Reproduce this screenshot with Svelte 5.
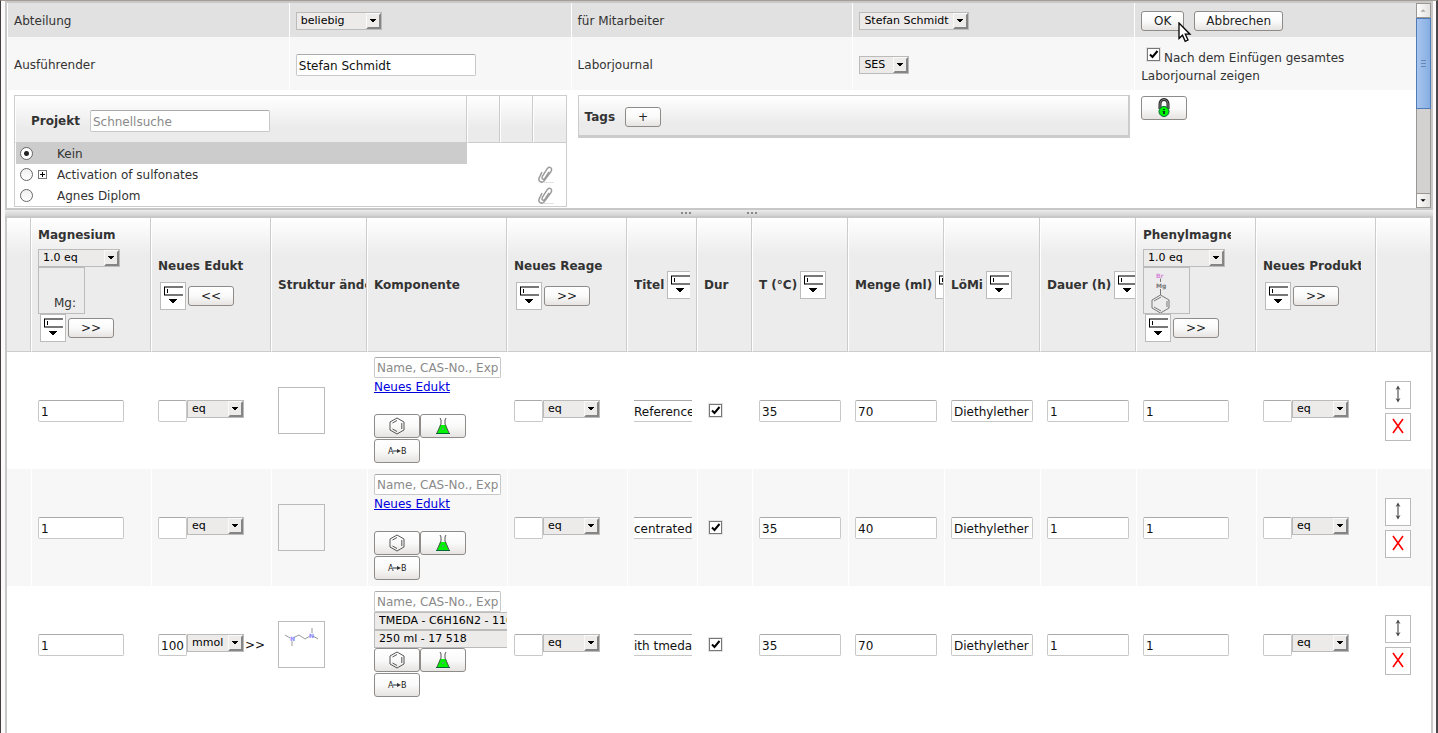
<script lang="ts">
    const columns = [
        { title: "", width: 24 },
        { title: "Magnesium", width: 120, eq: true, structure: "mg", button: ">>" },
        { title: "Neues Edukt", width: 120, button: "<<" },
        { title: "Struktur ändern", width: 96 },
        { title: "Komponente", width: 140 },
        { title: "Neues Reage", width: 120, button: ">>" },
        { title: "Titel", width: 70, fill: true, clip: true },
        { title: "Dur", width: 55 },
        { title: "T (°C)", width: 96, fill: true },
        { title: "Menge (ml)", width: 96, fill: true },
        { title: "LöMi", width: 96, fill: true },
        { title: "Dauer (h)", width: 96, fill: true },
        { title: "Phenylmagnesium", width: 120, eq: true, structure: "phenyl", button: ">>" },
        { title: "Neues Produkt", width: 120, button: ">>" },
        { title: "", width: 0 },
    ];

    let rows = $state([
        { edukt: "", unit: "eq", title: "Reference", temp: "35", volume: "70", solvent: "Diethylether", time: "1", done: true, tmeda: false },
        { edukt: "", unit: "eq", title: "centrated", temp: "35", volume: "40", solvent: "Diethylether", time: "1", done: true, tmeda: false },
        { edukt: "100", unit: "mmol", title: "ith tmeda", temp: "35", volume: "70", solvent: "Diethylether", time: "1", done: true, tmeda: true },
    ]);

    const projects = [
        { name: "Kein", tree: false, clip: false },
        { name: "Activation of sulfonates", tree: true, clip: true },
        { name: "Agnes Diplom", tree: false, clip: true },
    ];
    let project = $state("Kein");
    let executor = $state("Stefan Schmidt");
    let showAll = $state(true);
</script>

{#snippet drop(label, text, size, id)}
    <span class="drop {size}">
        <select {id} aria-label={label}><option>{text}</option></select>
        <svg class="drop-arrow" width="15" height="16" viewBox="0 0 15 16">
            <rect width="15" height="16" fill="#eeecea" />
            <path d="M0 0H15V1H1V16H0Z" fill="#fafafa" />
            <path d="M15 0V16H0L2 14H13V2Z" fill="#858585" />
            <path d="M4 6H10V7H9V8H8V9H6V8H5V7H4Z" fill="#000" />
        </svg>
    </span>
{/snippet}

{#snippet fillButton()}
    <button class="tile" aria-label="Spalte ausfüllen">
        <svg width="24" height="26" viewBox="0 0 24 26">
            <path d="M3 4H22M3 12H22" stroke="#777" stroke-width="2" />
            <path d="M3.5 4V12M6.5 6V10" stroke="#000" />
            <path d="M8 16H16V17H15V18H14V19H13V20H11V19H10V18H9V17H8Z" fill="#000" />
        </svg>
    </button>
{/snippet}

{#snippet clipIcon()}
    <svg width="18" height="18" viewBox="0 0 18 18" fill="none">
        <path d="M7 16.5H17" stroke="#e2e2e2" />
        <path d="M5 6 2.2 11.8C.8 15 4.5 17.6 7 15L13.8 5.8C16 2 12.6 0 10.4 2.4L5.5 10.2C4 13.4 6.8 14.2 8 12.2L12 6" stroke="#9c9c9c" stroke-width="1.5" />
    </svg>
{/snippet}

<div class="app">
    <section class="upper">
        <div class="scroll-area">
            <table class="form">
                <tbody>
                    <tr class="row-dark">
                        <td><label for="dept">Abteilung</label></td>
                        <td>{@render drop("Abteilung", "beliebig", "w86", "dept")}</td>
                        <td><label for="user">für Mitarbeiter</label></td>
                        <td>{@render drop("für Mitarbeiter", "Stefan Schmidt", "w110", "user")}</td>
                        <td>
                            <div class="actions">
                                <button class="ok">OK
                                    <svg class="cursor" width="14" height="21" viewBox="0 0 14 21">
                                        <path d="M1 1V16.5L4.5 13.2 7.2 19.3 10 18 7.3 12.2H12Z" fill="#fff" stroke="#000" stroke-width="1.3" />
                                    </svg>
                                </button>
                                <button class="cancel">Abbrechen</button>
                            </div>
                        </td>
                    </tr>
                    <tr class="row-light">
                        <td><label for="executor">Ausführender</label></td>
                        <td><input id="executor" class="w180" type="text" bind:value={executor} /></td>
                        <td><label for="journal">Laborjournal</label></td>
                        <td>{@render drop("Laborjournal", "SES", "w50", "journal")}</td>
                        <td>
                            <label class="show-all"><input type="checkbox" bind:checked={showAll} /> Nach dem Einfügen gesamtes Laborjournal zeigen</label>
                        </td>
                    </tr>
                    <tr class="row-boxes">
                        <td colspan="2">
                            <table class="projects">
                                <colgroup><col /><col class="narrow" /><col class="narrow" /><col class="narrow" /></colgroup>
                                <thead>
                                    <tr>
                                        <th>
                                            <div class="project-head">
                                                <label for="quick">Projekt</label>
                                                <input id="quick" class="w180" type="text" placeholder="Schnellsuche" />
                                            </div>
                                        </th>
                                        <th></th>
                                        <th></th>
                                        <th></th>
                                    </tr>
                                </thead>
                                <tbody>
                                    {#each projects as p}
                                        <tr>
                                            <td class:selected={project === p.name}>
                                                <label class="project">
                                                    <input type="radio" name="project" value={p.name} bind:group={project} />
                                                    <span class="tree">
                                                        {#if p.tree}
                                                            <svg width="9" height="9" viewBox="0 0 9 9" fill="none">
                                                                <rect x=".5" y=".5" width="8" height="8" stroke="#777" />
                                                                <path d="M2 4.5H7M4.5 2V7" stroke="#000" />
                                                            </svg>
                                                        {/if}
                                                    </span>
                                                    {p.name}
                                                </label>
                                            </td>
                                            <td></td>
                                            <td></td>
                                            <td class="clip-cell">
                                                {#if p.clip}{@render clipIcon()}{/if}
                                            </td>
                                        </tr>
                                    {/each}
                                </tbody>
                            </table>
                        </td>
                        <td colspan="2">
                            <div class="tags">
                                <strong>Tags</strong>
                                <button class="w36" aria-label="Tag hinzufügen">+</button>
                            </div>
                        </td>
                        <td>
                            <button class="icon-button" aria-label="Sperren">
                                <svg width="14" height="20" viewBox="0 0 14 20">
                                    <path d="M3 11V6a4 4.5 0 0 1 8 0V11" fill="none" stroke="#222" stroke-width="3" />
                                    <path d="M3 11V6a4 4.5 0 0 1 8 0V11" fill="none" stroke="#888" />
                                    <circle cx="7" cy="13.5" r="5" fill="#00f400" stroke="#063" />
                                    <path d="M6 11H8V12H6ZM5.5 13H8V16H6V14H5.5Z" fill="#042" />
                                </svg>
                            </button>
                        </td>
                    </tr>
                </tbody>
            </table>
        </div>
        <div class="scrollbar">
            <svg class="end" width="15" height="15" viewBox="0 0 15 15"><path d="M4 9H10L7 6Z" fill="#aaa" /></svg>
            <div class="thumb">
                <svg width="5" height="8" viewBox="0 0 5 8"><path d="M0 .5H5M0 3.5H5M0 6.5H5" stroke="#6487b4" /></svg>
            </div>
            <svg class="end down" width="15" height="15" viewBox="0 0 15 15"><path d="M4 6H10L7 9Z" fill="#000" /></svg>
        </div>
    </section>

    <div class="splitter">
        <svg width="10" height="2" viewBox="0 0 10 2"><path d="M0 1H2M4 1H6M8 1H10" stroke="#888" stroke-width="2" /></svg>
        <svg width="10" height="2" viewBox="0 0 10 2"><path d="M0 1H2M4 1H6M8 1H10" stroke="#888" stroke-width="2" /></svg>
    </div>

    <section class="lower">
        <table class="grid">
            <colgroup>
                {#each columns as col}
                    <col style={col.width ? `width: ${col.width}px` : undefined} />
                {/each}
            </colgroup>
            <thead>
                <tr>
                    {#each columns as col}
                        <th>
                            {#if col.fill}
                                <div class="head-line" class:clipped={col.clip}>
                                    {col.title}{@render fillButton()}
                                </div>
                            {:else}
                                <div class="title" class:short={col.eq} class:product={col.title === "Neues Produkt"} class:spaced={col.button && !col.eq}>{col.title}</div>
                                {#if col.eq}
                                    <div class="eq">{@render drop("Äquivalente", "1.0 eq", "w82")}</div>
                                    <div class="structure">
                                        {#if col.structure === "mg"}
                                            <span class="mg">Mg:</span>
                                        {:else}
                                            <svg width="45" height="45" viewBox="0 0 45 45" fill="none">
                                                <text x="12" y="10" class="atom br">Br</text>
                                                <text x="12" y="20" class="atom">Mg</text>
                                                <path d="M16.5 10.5V14M16.5 21V27M16.5 27 25 32V40L16.5 45 8 40V32ZM10 33 17 29M23 33V39M10 39 17 43" stroke="#777" />
                                            </svg>
                                        {/if}
                                    </div>
                                {/if}
                                {#if col.button}
                                    <div class="head-buttons">
                                        {@render fillButton()}
                                        <button class="w46">{col.button}</button>
                                    </div>
                                {/if}
                            {/if}
                        </th>
                    {/each}
                </tr>
            </thead>
            <tbody>
                {#each rows as row}
                    <tr>
                        <td></td>
                        <td><input class="w86" type="text" value="1" aria-label="Magnesium" /></td>
                        <td>
                            <div class="amount">
                                <input class="w29" type="text" bind:value={row.edukt} aria-label="Neues Edukt" />
                                {@render drop("Einheit", row.unit, "w57")}
                                {#if row.tmeda}<span class="more">&gt;&gt;</span>{/if}
                            </div>
                        </td>
                        <td>
                            <div class="structure">
                                {#if row.tmeda}
                                    <svg width="45" height="45" viewBox="0 0 45 45" fill="none">
                                        <path d="M6 13 11 16M13 19V24M14 16 20 13 26 17 31 14M33 11V6M34 14 39 17" stroke="#999" />
                                        <text x="11" y="19" class="atom n">N</text>
                                        <text x="30" y="16" class="atom n">N</text>
                                    </svg>
                                {/if}
                            </div>
                        </td>
                        <td class="component">
                            <input class="search" type="text" placeholder="Name, CAS-No., Exp" aria-label="Komponente suchen" />
                            {#if row.tmeda}
                                {@render drop("Komponente", "TMEDA - C6H16N2 - 110-18-9", "w200")}
                                {@render drop("Gebinde", "250 ml - 17 518", "w200")}
                            {:else}
                                <div class="link"><a href="#edukt">Neues Edukt</a></div>
                            {/if}
                            <div class="tools">
                                <button class="icon-button" aria-label="Struktur">
                                    <svg width="18" height="18" viewBox="0 0 18 18" fill="none">
                                        <path d="M9 1 16 5V13L9 17 2 13V5ZM9 3.5 4.5 6M13.8 6V12M4.5 12 9 14.5" stroke="#555" />
                                    </svg>
                                </button>
                                <button class="icon-button" aria-label="Reaktion">
                                    <svg width="16" height="18" viewBox="0 0 16 18">
                                        <path d="M5 8H11L14 16H2Z" fill="#00f400" />
                                        <path d="M5 1 6 3V7L2 16M11 1 10 3V7L14 16" fill="none" stroke="#555" />
                                        <path d="M1 16.5H15" stroke="#063" />
                                        <circle cx="8" cy="12" r="1" fill="#afa" stroke="#063" stroke-width=".5" />
                                    </svg>
                                </button>
                                <button class="icon-button" aria-label="Umsetzung">
                                    <svg width="20" height="10" viewBox="0 0 20 10">
                                        <text x="1" y="8" class="ab">A</text>
                                        <text x="14" y="8" class="ab">B</text>
                                        <path d="M6 5H11" stroke="#333" />
                                        <path d="M10 3 14 5 10 7Z" fill="#333" />
                                    </svg>
                                </button>
                            </div>
                        </td>
                        <td>
                            <div class="amount">
                                <input class="w29" type="text" aria-label="Neues Reagens" />
                                {@render drop("Einheit", "eq", "w57")}
                            </div>
                        </td>
                        <td><input class="row-title" type="text" bind:value={row.title} aria-label="Titel" /></td>
                        <td><input class="done" type="checkbox" bind:checked={row.done} aria-label="Durchgeführt" /></td>
                        <td><input class="w82" type="text" bind:value={row.temp} aria-label="T (°C)" /></td>
                        <td><input class="w82" type="text" bind:value={row.volume} aria-label="Menge (ml)" /></td>
                        <td><input class="w82" type="text" bind:value={row.solvent} aria-label="LöMi" /></td>
                        <td><input class="w82" type="text" bind:value={row.time} aria-label="Dauer (h)" /></td>
                        <td><input class="w86" type="text" value="1" aria-label="Phenylmagnesium" /></td>
                        <td>
                            <div class="amount">
                                <input class="w29" type="text" aria-label="Neues Produkt" />
                                {@render drop("Einheit", "eq", "w57")}
                            </div>
                        </td>
                        <td>
                            <div class="row-actions">
                                <button class="tile" aria-label="Verschieben">
                                    <svg width="24" height="26" viewBox="0 0 24 26">
                                        <path d="M12 6V18" stroke="#999" stroke-width="2" />
                                        <path d="M12 3.5 14.5 8 12 6.5 9.5 8ZM12 20.5 14.5 16 12 17.5 9.5 16Z" fill="#444" />
                                    </svg>
                                </button>
                                <button class="tile" aria-label="Löschen">
                                    <svg width="24" height="26" viewBox="0 0 24 26">
                                        <path d="M7 5 17 19M17 5 7 19" stroke="#f00" stroke-width="1.6" />
                                    </svg>
                                </button>
                            </div>
                        </td>
                    </tr>
                {/each}
            </tbody>
        </table>
    </section>
</div>

<style>
    :global(body) {
        margin: 0;
        background: #fff;
    }
    .app, .app * {
        box-sizing: border-box;
    }
    .app {
        display: flex;
        flex-direction: column;
        min-height: 100vh;
        padding: 0 3px 0 4px;
        border-left: 1px solid #3f3d3f;
        border-right: 2px solid #4a484a;
        border-top: 1px solid #a39d96;
        background: #fbf9f9;
        color: #333;
        font: 12px/18px "DejaVu Sans", Verdana, sans-serif;
    }
    table {
        width: 100%;
        table-layout: fixed;
        border-collapse: separate;
        border-spacing: 0;
    }
    td, th {
        padding: 0;
        text-align: left;
        vertical-align: middle;
    }
    button, select, input {
        margin: 0;
        font-family: inherit;
        color: #111;
    }
    button {
        height: 20px;
        padding: 0;
        border: 1px solid #8f8b88;
        border-radius: 3px;
        background: linear-gradient(#fff, #fafafa 50%, #e6e4e2);
        font-size: 12px;
        line-height: 18px;
        color: #222;
    }
    button svg {
        display: block;
        margin: 0 auto;
    }
    input[type="text"] {
        display: block;
        height: 22px;
        padding: 2px 2px 0;
        border: 1px solid #c8c8c8;
        border-top-color: #aaa;
        border-radius: 2px;
        background: #fff;
        font-size: 12px;
        outline: none;
    }
    input::placeholder {
        color: #8a8a8a;
        opacity: 1;
    }
    input[type="checkbox"] {
        appearance: none;
        width: 13px;
        height: 13px;
        border: 1px solid #777;
        background: #fff;
        box-shadow: 0 0 0 1px #e4e2e0;
    }
    input[type="checkbox"]:checked {
        background: url('data:image/svg+xml,<svg xmlns="http://www.w3.org/2000/svg" viewBox="0 0 11 11"><path d="M2 5.5 4.5 8 9.5 2" fill="none" stroke="black" stroke-width="2"/></svg>') #fff;
    }
    input[type="radio"] {
        appearance: none;
        width: 13px;
        height: 13px;
        border: 1px solid #666;
        border-radius: 50%;
        background: linear-gradient(#f0f0f0, #fff);
    }
    input[type="radio"]:checked {
        background: radial-gradient(#222 0 2px, #fff 3px);
    }

    .drop {
        display: block;
        position: relative;
        height: 18px;
    }
    .drop select {
        display: block;
        appearance: none;
        width: 100%;
        height: 18px;
        padding: 0 0 0 4px;
        border: 1px solid #bbb;
        border-radius: 0;
        background: #edebea;
        font-size: 11px;
        line-height: 16px;
        color: #000;
    }
    .drop-arrow {
        position: absolute;
        top: 1px;
        right: 1px;
        pointer-events: none;
    }
    .w29 { width: 29px; }
    .w36 { width: 36px; }
    .w46 { width: 46px; }
    .w50 { width: 50px; }
    .w57 { width: 57px; }
    .w82 { width: 82px; }
    .w86 { width: 86px; }
    .w110 { width: 110px; }
    .w180 { width: 180px; }
    .w200 { width: 200px; }

    /* upper pane */
    .upper {
        display: flex;
        height: 209px;
        border: 2px solid #c8c8c8;
        background: #fff;
    }
    .scroll-area {
        flex: 1;
        overflow: hidden;
    }
    .form > tbody > tr > td {
        padding: 2px 4px 0 6px;
        border-left: 1px solid #fff;
    }
    .row-dark {
        height: 34px;
        background: #e1e1e1;
    }
    .row-light {
        height: 53px;
        background: #f7f7f7;
    }
    .form > tbody > .row-boxes > td {
        padding-top: 5px;
        vertical-align: top;
    }
    .row-boxes .icon-button {
        margin-top: 1px;
    }
    .actions {
        display: flex;
        gap: 10px;
    }
    .ok {
        position: relative;
        width: 43px;
    }
    .cancel {
        width: 89px;
    }
    .cursor {
        position: absolute;
        left: 36px;
        top: 10px;
        z-index: 1;
    }
    .show-all {
        display: block;
        padding-top: 4px;
    }
    .show-all input {
        margin: 0 0 1px 6px;
    }
    .icon-button {
        display: block;
        width: 46px;
        height: 24px;
    }

    .projects {
        border: 1px solid #ccc;
    }
    .projects .narrow {
        width: 33px;
    }
    .projects th {
        height: 47px;
        border-left: 1px solid #fff;
        border-right: 1px solid #ccc;
        border-bottom: 1px solid #ccc;
        background: linear-gradient(#fff, #ebebeb 70%);
    }
    .projects th:last-child {
        border-right: 0;
    }
    .project-head {
        display: flex;
        align-items: center;
        gap: 10px;
        padding: 4px 0 0 15px;
    }
    .projects td {
        height: 21px;
        border-left: 1px solid #fff;
    }
    .projects .selected {
        background: #ccc;
    }
    .project {
        display: flex;
        align-items: center;
        padding-left: 4px;
    }
    .tree {
        display: flex;
        width: 24px;
        padding-left: 5px;
    }
    .clip-cell svg {
        display: block;
        margin-left: 3px;
    }
    .tags {
        display: flex;
        align-items: center;
        gap: 10px;
        height: 43px;
        padding: 3px 0 0 6px;
        border: 1px solid #ccc;
        border-right-width: 2px;
        border-bottom-width: 3px;
        background: linear-gradient(#fff, #ebebeb 70%);
    }

    .scrollbar {
        display: flex;
        flex-direction: column;
        width: 15px;
        background: #d4d2d0;
        border: 1px solid #9a9793;
        border-width: 0 1px;
    }
    .end {
        flex: none;
        width: 13px;
        border: 1px solid #9a9793;
        border-width: 1px 0;
        background: linear-gradient(90deg, #fdfdfd, #e4e2e0);
    }
    .down {
        margin-top: auto;
    }
    .thumb {
        display: flex;
        align-items: center;
        justify-content: center;
        height: 91px;
        margin: 0 -1px;
        border: 1px solid #4f7cb8;
        background: linear-gradient(90deg, #a8c5ee, #86aee2);
    }

    .splitter {
        display: flex;
        align-items: center;
        justify-content: center;
        gap: 56px;
        height: 6px;
        background: linear-gradient(#ebebeb, #d2d2d2);
    }

    /* reaction table */
    .lower {
        flex: 1;
        border: 2px solid #c8c8c8;
        border-bottom: 0;
        background: #fff;
    }
    .grid th, .grid td {
        padding-left: 6px;
        border-left: 1px solid #fff;
        overflow: hidden;
    }
    .grid th:first-child, .grid td:first-child {
        border-left: 0;
    }
    .grid th {
        height: 134px;
        border-right: 1px solid #ccc;
        border-bottom: 1px solid #ccc;
        background: linear-gradient(#fff, #ececec 28%);
        white-space: nowrap;
    }
    .grid td {
        height: 117px;
    }
    .grid tbody tr:nth-child(even) {
        background: #f7f7f7;
    }
    .title {
        overflow: hidden;
    }
    .head-line {
        display: flex;
        align-items: center;
        gap: 3px;
    }
    .clipped {
        width: 56px;
        overflow: hidden;
    }
    .short {
        width: 88px;
    }
    .product {
        width: 98px;
    }
    .spaced {
        margin-bottom: 7px;
    }
    .eq {
        width: 82px;
        margin-top: 5px;
    }
    .structure {
        width: 47px;
        height: 47px;
        border: 1px solid #bbb;
    }
    .structure svg {
        display: block;
    }
    .mg {
        display: block;
        padding: 26px 0 0 15px;
        font-weight: normal;
    }
    .atom {
        font-size: 6px;
        font-weight: bold;
        fill: #777;
    }
    .br { fill: #d88ad8; }
    .n { fill: #88f; }
    .head-buttons {
        display: flex;
        align-items: center;
        gap: 2px;
        padding: 0 0 2px 2px;
    }
    .tile {
        flex: none;
        width: 26px;
        height: 28px;
        border: 1px solid #bbb;
        border-radius: 0;
        background: #fff;
    }
    .amount {
        display: flex;
        align-items: flex-start;
    }
    .more {
        margin-top: 2px;
        padding-left: 1px;
        color: #111;
    }
    .grid .component {
        padding-bottom: 2px;
    }
    input.search {
        width: 127px;
        height: 21px;
    }
    .link {
        height: 36px;
    }
    .link a {
        color: #00d;
    }
    .tools {
        display: flex;
        flex-wrap: wrap;
        row-gap: 1px;
    }
    .ab {
        font-size: 8px;
        fill: #222;
    }
    input.row-title {
        width: 58px;
        padding: 2px 0 0;
        border-left: 0;
        border-right: 0;
        border-radius: 0;
    }
    .done {
        display: block;
        margin-left: 5px;
    }
    .row-actions {
        display: flex;
        flex-direction: column;
        gap: 4px;
        padding-left: 2px;
    }
</style>
